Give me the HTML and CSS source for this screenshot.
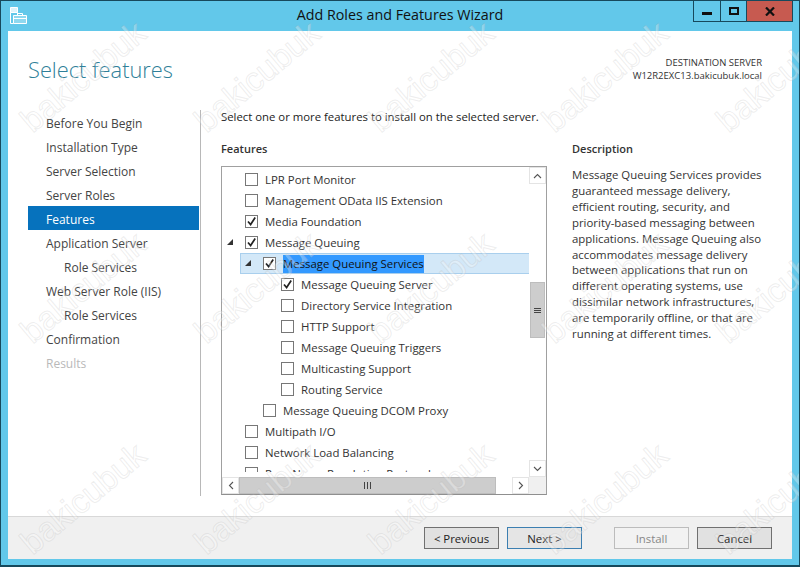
FILE: index.html
```html
<!DOCTYPE html>
<html lang="en">
<head>
<meta charset="utf-8">
<title>Add Roles and Features Wizard</title>
<link rel="stylesheet" href="styles.css">
</head>
<body>
<div class="window">
  <header class="titlebar">
    <svg class="app-icon" width="18" height="17" viewBox="0 0 18 17">
      <path d="M.5.5h7v5h-7z" fill="#dff4fb" stroke="#fff"/>
      <path d="M.5 5.5v11h3" fill="none" stroke="#fff"/>
      <path d="M7.5 5.5v2" fill="none" stroke="#fff"/>
      <path d="M3.5 8.5h13v8h-13z" fill="#8fd8ef" stroke="#fff"/>
      <path d="M7.5 8V6.5h5V8" fill="none" stroke="#fff"/>
      <path d="M4 11.5h12" stroke="#fff"/>
    </svg>
    <h1 class="title">Add Roles and Features Wizard</h1>
    <div class="controls">
      <div class="ctl"><span class="min-glyph"></span></div>
      <div class="ctl"><span class="max-glyph"></span></div>
      <div class="ctl ctl-close">
        <svg width="10" height="9" viewBox="0 0 10 9"><path d="M1 .5l8 8M9 .5l-8 8" stroke="#111" stroke-width="2.2" fill="none"/></svg>
      </div>
    </div>
  </header>
  <main class="client">
    <div class="head">
      <h2 class="page-title">Select features</h2>
      <div class="dest">
        <div>DESTINATION SERVER</div>
        <div>W12R2EXC13.bakicubuk.local</div>
      </div>
    </div>
    <div class="body">
      <nav class="steps">
        <div class="step">Before You Begin</div>
        <div class="step">Installation Type</div>
        <div class="step">Server Selection</div>
        <div class="step">Server Roles</div>
        <div class="step step-active">Features</div>
        <div class="step">Application Server</div>
        <div class="step step-sub">Role Services</div>
        <div class="step">Web Server Role (IIS)</div>
        <div class="step step-sub">Role Services</div>
        <div class="step">Confirmation</div>
        <div class="step step-off">Results</div>
      </nav>
      <section class="pane">
        <p class="intro">Select one or more features to install on the selected server.</p>
        <div class="columns">
          <div class="features">
            <h3 class="col-head">Features</h3>
            <div class="listbox">
              <div class="list-main">
                <div class="tree">
                  <div class="row l0"><span class="twist"></span><span class="cb"></span><span class="lbl">LPR Port Monitor</span></div>
                  <div class="row l0"><span class="twist"></span><span class="cb"></span><span class="lbl">Management OData IIS Extension</span></div>
                  <div class="row l0"><span class="twist"></span><span class="cb on"><svg width="11" height="11" viewBox="0 0 11 11"><path d="M2 5.5l2.6 3L9.2 1.5" fill="none" stroke="#222" stroke-width="1.7"/></svg></span><span class="lbl">Media Foundation</span></div>
                  <div class="row l0"><span class="twist open"></span><span class="cb on"><svg width="11" height="11" viewBox="0 0 11 11"><path d="M2 5.5l2.6 3L9.2 1.5" fill="none" stroke="#222" stroke-width="1.7"/></svg></span><span class="lbl">Message Queuing</span></div>
                  <div class="row l1 row-selected"><span class="twist open"></span><span class="cb on"><svg width="11" height="11" viewBox="0 0 11 11"><path d="M2 5.5l2.6 3L9.2 1.5" fill="none" stroke="#222" stroke-width="1.7"/></svg></span><span class="lbl lbl-sel">Message Queuing Services</span></div>
                  <div class="row l2"><span class="twist"></span><span class="cb on"><svg width="11" height="11" viewBox="0 0 11 11"><path d="M2 5.5l2.6 3L9.2 1.5" fill="none" stroke="#222" stroke-width="1.7"/></svg></span><span class="lbl">Message Queuing Server</span></div>
                  <div class="row l2"><span class="twist"></span><span class="cb"></span><span class="lbl">Directory Service Integration</span></div>
                  <div class="row l2"><span class="twist"></span><span class="cb"></span><span class="lbl">HTTP Support</span></div>
                  <div class="row l2"><span class="twist"></span><span class="cb"></span><span class="lbl">Message Queuing Triggers</span></div>
                  <div class="row l2"><span class="twist"></span><span class="cb"></span><span class="lbl">Multicasting Support</span></div>
                  <div class="row l2"><span class="twist"></span><span class="cb"></span><span class="lbl">Routing Service</span></div>
                  <div class="row l1"><span class="twist"></span><span class="cb"></span><span class="lbl">Message Queuing DCOM Proxy</span></div>
                  <div class="row l0"><span class="twist"></span><span class="cb"></span><span class="lbl">Multipath I/O</span></div>
                  <div class="row l0"><span class="twist"></span><span class="cb"></span><span class="lbl">Network Load Balancing</span></div>
                  <div class="row l0"><span class="twist"></span><span class="cb"></span><span class="lbl">Peer Name Resolution Protocol</span></div>
                </div>
                <div class="vscroll">
                  <div class="sb-btn"><svg width="9" height="6" viewBox="0 0 9 6"><path d="M1 5l3.5-3.5L8 5" fill="none" stroke="#555" stroke-width="1.1"/></svg></div>
                  <div class="v-track">
                    <div class="v-thumb"><span class="v-grip"></span></div>
                  </div>
                  <div class="sb-btn"><svg width="9" height="6" viewBox="0 0 9 6"><path d="M1 1l3.5 3.5L8 1" fill="none" stroke="#555" stroke-width="1.1"/></svg></div>
                </div>
              </div>
              <div class="hscroll">
                <div class="sb-btn-h"><svg width="6" height="9" viewBox="0 0 6 9"><path d="M5 1L1.5 4.5 5 8" fill="none" stroke="#555" stroke-width="1.1"/></svg></div>
                <div class="h-thumb"><span class="h-grip"></span></div>
                <div class="h-rest"></div>
                <div class="sb-btn-h"><svg width="6" height="9" viewBox="0 0 6 9"><path d="M1 1l3.5 3.5L1 8" fill="none" stroke="#555" stroke-width="1.1"/></svg></div>
                <div class="corner"></div>
              </div>
            </div>
          </div>
          <aside class="desc">
            <h3 class="col-head">Description</h3>
            <p class="desc-text">Message Queuing Services provides guaranteed message delivery, efficient routing, security, and priority-based messaging between applications. Message Queuing also accommodates message delivery between applications that run on different operating systems, use dissimilar network infrastructures, are temporarily offline, or that are running at different times.</p>
          </aside>
        </div>
      </section>
    </div>
    <footer class="footer">
      <button class="btn btn-prev">&lt; Previous</button>
      <button class="btn btn-next">Next &gt;</button>
      <button class="btn btn-install" disabled>Install</button>
      <button class="btn btn-cancel">Cancel</button>
    </footer>
  </main>
  <div class="marks" aria-hidden="true">
    <span class="wm">bakicubuk</span><span class="wm">bakicubuk</span><span class="wm">bakicubuk</span><span class="wm">bakicubuk</span><span class="wm">bakicubuk</span>
    <span class="wm">bakicubuk</span><span class="wm">bakicubuk</span><span class="wm">bakicubuk</span><span class="wm">bakicubuk</span><span class="wm">bakicubuk</span>
    <span class="wm">bakicubuk</span><span class="wm">bakicubuk</span><span class="wm">bakicubuk</span><span class="wm">bakicubuk</span><span class="wm">bakicubuk</span>
  </div>
</div>
</body>
</html>
```
FILE: styles.css
```css
* { box-sizing: border-box; }
html, body { margin: 0; padding: 0; }
body { width: 800px; height: 567px; overflow: hidden; font-family: "Open Sans", "Noto Sans", sans-serif; }
.window {
  position: relative; width: 800px; height: 567px; overflow: hidden;
  background: #62c8ea; border: 1px solid #17495c; border-bottom-width: 2px;
  display: flex; flex-direction: column; padding: 0 7px 6px;
}
.titlebar { height: 30px; flex: none; display: flex; position: relative; align-items: flex-start; justify-content: center; }
.app-icon { position: absolute; left: 2px; top: 6px; }
.title { margin: 4px 0 0 0; font-size: 14.3px; line-height: 20px; font-weight: 400; color: #111; }
.controls { position: absolute; right: -1px; top: 0; display: flex; height: 21px; border: 1px solid #17495c; border-top: 0; }
.ctl { width: 27px; display: flex; align-items: center; justify-content: center; border-right: 1px solid #17495c; position: relative; }
.ctl:nth-child(2) { width: 26px; }
.ctl-close { width: 45px; background: #c75a50; border-right: 0; }
.min-glyph { width: 10px; height: 3px; background: #111; margin-top: 5px; }
.max-glyph { width: 10px; height: 8px; border: 2px solid #111; }
.client { flex: 1; background: #fff; display: flex; flex-direction: column; min-height: 0; }
.head { height: 79px; flex: none; display: flex; justify-content: space-between; padding: 0 30px 0 20px; }
.page-title { margin: 23px 0 0; font-size: 21.8px; line-height: 32px; font-weight: 300; font-family: "Open Sans", sans-serif; color: #2f7f99; }
.dest { margin-top: 25px; text-align: right; font-size: 9.5px; line-height: 13px; color: #333; }
.body { flex: 1; display: flex; min-height: 0; }
.steps { width: 172px; margin-left: 20px; padding-right: 1px; flex: none; }
.step { height: 24px; line-height: 24px; padding: 2px 0 0 18px; font-size: 12px; color: #444; }
.step-sub { padding-left: 36px; }
.step-active { background: #0672bd; color: #fff; }
.step-off { color: #b9b9b9; }
.pane { flex: 1; border-left: 1px solid #b8b8b8; margin-bottom: 20px; padding-left: 20px; padding-right: 30px; display: flex; flex-direction: column; }
.intro { margin: 0; font-size: 11.35px; line-height: 14px; color: #222; height: 28px; }
.columns { flex: 1; display: flex; gap: 25px; min-height: 0; padding-top: 3px; }
.features { width: 326px; flex: none; display: flex; flex-direction: column; }
.col-head { margin: 0; font-size: 11px; line-height: 16px; font-weight: 600; color: #333; height: 25px; }
.listbox { width: 326px; height: 329px; border: 1px solid #a0a0a0; border-bottom-color: #8f8f8f; display: flex; flex-direction: column; background: #fff; }
.list-main { flex: 1; display: flex; min-height: 0; }
.tree { flex: 1; overflow: hidden; margin-bottom: 5px; padding-top: 2px; }
.row { height: 21px; display: flex; align-items: center; font-size: 11.4px; color: #333; white-space: nowrap; }
.l0 { padding-left: 2px; }
.l1 { padding-left: 20px; }
.l2 { padding-left: 38px; }
.twist { width: 21px; height: 21px; flex: none; position: relative; }
.twist.open::after { content: ""; position: absolute; left: 3px; top: 7px; border-style: solid; border-width: 0 0 6px 6px; border-color: transparent transparent #333 transparent; }
.cb { width: 13px; height: 13px; flex: none; border: 1px solid #777; background: #fff; display: flex; align-items: center; justify-content: center; }
.lbl { margin-left: 7px; line-height: 18px; }
.row-selected { background: #d3e8f8; border: 1px solid #a9cfed; border-right: 0; margin-left: 18px; padding-left: 1px; }
.lbl-sel { background: #3399ff; color: #111; }
.vscroll { width: 17px; flex: none; background: #fff; display: flex; flex-direction: column; }
.sb-btn { height: 17px; flex: none; display: flex; align-items: center; justify-content: center; background: #fff; border: 1px solid #e4e4e4; }
.v-track { flex: 1; background: #fff; padding: 98px 1px 0; }
.v-thumb { height: 56px; background: #cdcdcd; border: 1px solid #bdbdbd; display: flex; align-items: center; justify-content: center; }
.v-grip { width: 7px; height: 5px; border-top: 1px solid #444; border-bottom: 1px solid #444; position: relative; }
.v-grip::after { content: ""; position: absolute; left: 0; right: 0; top: 1px; height: 1px; background: #444; }
.hscroll { height: 17px; flex: none; display: flex; background: #fff; }
.sb-btn-h { width: 17px; flex: none; display: flex; align-items: center; justify-content: center; background: #fff; border: 1px solid #e4e4e4; }
.h-thumb { width: 257px; background: #cdcdcd; border: 1px solid #bdbdbd; display: flex; align-items: center; justify-content: center; }
.h-grip { width: 7px; height: 7px; border-left: 1px solid #444; border-right: 1px solid #444; position: relative; }
.h-grip::after { content: ""; position: absolute; top: 0; bottom: 0; left: 2px; width: 1px; background: #444; }
.h-rest { width: 16px; flex: none; }
.corner { flex: 1; background: #f0f0f0; }
.desc { flex: 1; min-width: 0; }
.desc-text { margin: 0; font-size: 11.4px; line-height: 15.9px; color: #333; padding-top: 1px; }
.footer { height: 43px; flex: none; background: #f0f0f0; border-top: 1px solid #d8d8d8; display: flex; align-items: flex-start; padding: 10px 0 0 416px; }
.btn { width: 75px; height: 22px; font: 11.4px "Open Sans", sans-serif; color: #222; background: #e1e1e1; border: 1px solid #707070; padding: 0; }
.btn-next { margin-left: 8px; border-color: #3c7fb1; background: #e5e5e5; }
.btn-install { margin-left: 32px; background: #f2f2f2; border-color: #bcbcbc; color: #888; }
.btn-cancel { margin-left: 8px; }
.marks {
  position: absolute; left: -5px; top: -30px; pointer-events: none;
  display: grid; grid-template-columns: repeat(5, 174px); grid-template-rows: repeat(3, 211px);
}
.wm {
  display: flex; align-items: center; justify-content: center;
  font: 400 33.5px "Liberation Sans", Arial, sans-serif;
  color: rgba(255,255,255,.3); -webkit-text-stroke: 1px rgba(175,175,175,.22);
  transform: rotate(-40deg);
}
```
